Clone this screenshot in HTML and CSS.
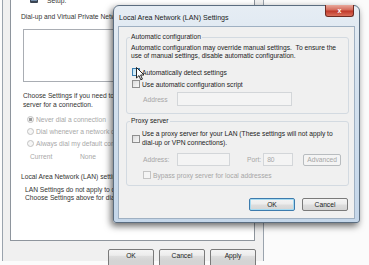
FILE: index.html
```html
<!DOCTYPE html>
<html lang="en">
<head>
    <meta charset="UTF-8">
    <title>Local Area Network (LAN) Settings</title>
    <link rel="stylesheet" href="styles.css">
</head>
<body>
    <div class="screen">
        <!-- Internet Properties, Connections tab (behind) -->
        <div class="window">
            <div class="panel">
                <div class="setup-row">
                    <svg class="setup-icon" width="8" height="8" viewBox="0 0 8 8"><rect x="0" y="0" width="8" height="7" rx="1" fill="#3a4552"/><rect x="1" y="1" width="6" height="4" fill="#6f8aa8"/></svg>
                    <span>Setup.</span>
                </div>
                <div class="section-title">Dial-up and Virtual Private Network settings</div>
                <div class="listbox"></div>
                <p class="note">Choose Settings if you need to configure a proxy<br>server for a connection.</p>
                <div class="radio-list">
                    <div class="radio checked"><span class="dot"></span>Never dial a connection</div>
                    <div class="radio"><span class="dot"></span>Dial whenever a network connection is not present</div>
                    <div class="radio"><span class="dot"></span>Always dial my default connection</div>
                </div>
                <div class="current"><span class="cur-label">Current</span><span>None</span></div>
                <div class="section-title lan-title">Local Area Network (LAN) settings</div>
                <p class="note lan-note">LAN Settings do not apply to dial-up connections.<br>Choose Settings above for dial-up settings.</p>
            </div>
            <div class="footer">
                <button class="btn wide">OK</button>
                <button class="btn wide">Cancel</button>
                <button class="btn wide">Apply</button>
            </div>
        </div>

        <!-- LAN settings dialog (on top) -->
        <div class="dialog">
            <div class="titlebar">
                <span class="title">Local Area Network (LAN) Settings</span>
                <span class="close">x</span>
            </div>
            <div class="client">
                <fieldset class="group auto-group">
                    <legend>Automatic configuration</legend>
                    <p class="desc">Automatic configuration may override manual settings.&nbsp; To ensure the<br>use of manual settings, disable automatic configuration.</p>
                    <div class="check-row"><span class="box hover"></span>Automatically detect settings</div>
                    <div class="check-row"><span class="box"></span>Use automatic configuration script</div>
                    <div class="field-row">
                        <span class="field-label off">Address</span>
                        <span class="field off script-field"></span>
                    </div>
                </fieldset>
                <fieldset class="group proxy-group">
                    <legend>Proxy server</legend>
                    <div class="check-row proxy-row"><span class="box"></span><span>Use a proxy server for your LAN (These settings will not apply to<br>dial-up or VPN connections).</span></div>
                    <div class="field-row proxy-fields">
                        <span class="field-label off">Address:</span>
                        <span class="field off addr-field"></span>
                        <span class="port-label off">Port:</span>
                        <span class="field off port-field">80</span>
                        <span class="btn small off">Advanced</span>
                    </div>
                    <div class="check-row bypass-row off"><span class="box off"></span>Bypass proxy server for local addresses</div>
                </fieldset>
                <div class="actions">
                    <button class="btn default">OK</button>
                    <button class="btn">Cancel</button>
                </div>
            </div>
        </div>

        <svg class="cursor" width="9" height="14" viewBox="0 0 9 14"><path d="M0.5 0.5 L0.5 11 L3 8.6 L4.8 12.8 L6.4 12.1 L4.6 8 L8 8 Z" fill="#fff" stroke="#111" stroke-width="0.9" stroke-linejoin="round"/></svg>
    </div>
</body>
</html>
```

FILE: styles.css
```css
/* --- Page --- */
body {
    margin: 0;
    background-color: #fbfbfb;
    font-family: 'Liberation Sans', Arial, sans-serif;
    font-size: 6.7px;
    color: #1c1c1c;
}

.screen {
    position: relative;
    width: 369px;
    height: 265px;
    overflow: hidden;
}

p {
    margin: 0;
}

.off {
    color: #a6a6a6;
}

/* --- Background window (Connections tab) --- */
.window {
    margin-left: 2px;
    width: 262px;
    height: 265px;
    box-sizing: border-box;
    border-left: 1px solid #9aa3ad;
    border-right: 1px solid #9aa3ad;
    background-color: #f0f0f0;
}

.panel {
    margin-left: 7px;
    width: 245px;
    height: 245px;
    box-sizing: border-box;
    border: 1px solid #8e959d;
    border-top: none;
    background-color: #fff;
    padding-left: 10px;
    color: #333;
    white-space: nowrap;
}

.setup-row {
    display: flex;
    align-items: center;
    height: 8px;
    margin-top: -4px;
    padding-left: 9px;
    gap: 9px;
}

.section-title {
    margin-top: 9px;
    line-height: 8px;
}

.listbox {
    margin-top: 8px;
    margin-left: 2px;
    width: 200px;
    height: 53px;
    box-sizing: border-box;
    border: 1px solid #a9adb3;
}

.note {
    margin-top: 9px;
    margin-left: 2px;
    line-height: 9px;
}

.radio-list {
    margin-top: 4px;
    margin-left: 6px;
}

.radio {
    display: flex;
    align-items: center;
    height: 12px;
    color: #a8a8a8;
}

.dot {
    width: 5px;
    height: 5px;
    border: 1px solid #c2c2c2;
    border-radius: 50%;
    background-color: #f6f6f6;
    margin-right: 2px;
    flex-shrink: 0;
}

.radio.checked .dot {
    background: radial-gradient(circle, #9a9a9a 0 1.4px, #f2f2f2 1.8px);
}

.current {
    display: flex;
    margin-top: 4px;
    margin-left: 9px;
    line-height: 8px;
    color: #a8a8a8;
}

.cur-label {
    width: 50px;
}

.lan-title {
    margin-top: 12px;
}

.lan-note {
    margin-top: 5px;
    margin-left: 4px;
    line-height: 8px;
}

.footer {
    display: flex;
    justify-content: flex-end;
    gap: 5px;
    padding-top: 8px;
    padding-right: 7px;
}

/* --- Buttons --- */
.btn {
    height: 13px;
    box-sizing: border-box;
    padding: 0;
    border: 1px solid #7a7a7a;
    border-radius: 2px;
    background: linear-gradient(#f4f4f4 0%, #ececec 48%, #dedede 52%, #d4d4d4 100%);
    font-family: inherit;
    font-size: inherit;
    color: #222;
    display: flex;
    align-items: center;
    justify-content: center;
}

.btn.wide {
    width: 46px;
    height: 20px;
    padding-bottom: 8px;
    background: linear-gradient(#f4f4f4 0%, #ececec 30%, #dedede 33%, #d4d4d4 60%);
}

.btn.default {
    border-color: #3d7bad;
    box-shadow: inset 0 0 0 1px #a6dbf2;
}

.btn.small.off {
    width: 38px;
    height: 12px;
    border-color: #b8bcbf;
    background: #f4f4f4;
    color: #a6a6a6;
}

/* --- LAN dialog --- */
.dialog {
    position: absolute;
    left: 113px;
    top: 5px;
    width: 247px;
    height: 218px;
    box-sizing: border-box;
    border: 1px solid #5b6d80;
    border-radius: 6px 6px 3px 3px;
    background: linear-gradient(#e6edf4, #d4e1ee 40%, #c4d6e9);
    box-shadow: -2px 3px 7px rgba(0, 0, 0, 0.6);
    padding: 0 4px 3px 4px;
    display: flex;
    flex-direction: column;
    white-space: nowrap;
}

.titlebar {
    display: flex;
    justify-content: space-between;
    height: 20px;
}

.title {
    padding-top: 8px;
    padding-left: 1px;
    font-size: 7.1px;
    line-height: 8px;
    color: #1b1b1b;
}

.close {
    margin-top: -1px;
    margin-right: 1px;
    width: 29px;
    height: 12px;
    box-sizing: border-box;
    border: 1px solid #6e2a22;
    border-top: none;
    border-radius: 0 0 3px 3px;
    background: linear-gradient(#e8a99c, #d46a5a 45%, #c0392b 55%, #d9705c);
    color: #fff;
    font-size: 7px;
    font-weight: bold;
    line-height: 11px;
    text-align: center;
}

.client {
    flex: 1;
    background-color: #f0f0f0;
    border: 1px solid #9fb0c2;
    display: flex;
    flex-direction: column;
}

/* --- Group boxes --- */
.group {
    margin: 6px 5px 0 7px;
    padding: 0 4px 7px 3px;
    border: 1px solid #d3dae1;
    border-radius: 3px;
    min-width: 0;
}

.group legend {
    padding: 0 1px;
    line-height: 8px;
}

.proxy-group {
    margin-top: 3px;
    padding-bottom: 5px;
}

.desc {
    margin-top: 3px;
    margin-left: 1px;
    line-height: 7.5px;
}

.check-row {
    display: flex;
    align-items: center;
    height: 12px;
    margin-left: 2px;
}

.auto-group .check-row:first-of-type {
    margin-top: 7px;
}

.box {
    width: 8px;
    height: 8px;
    box-sizing: border-box;
    border: 1px solid #8f8f8f;
    background: linear-gradient(135deg, #dcdcdc, #f8f8f8);
    margin-right: 2px;
    flex-shrink: 0;
}

.box.hover {
    border-color: #3c7fb1;
    background: linear-gradient(135deg, #bfe3f7, #e9f6fd);
}

.box.off {
    border-color: #c4c4c4;
    background: #f4f4f4;
}

.field-row {
    display: flex;
    align-items: center;
    margin-top: 2px;
    margin-left: 13px;
    height: 14px;
}

.field-label {
    width: 34px;
}

.field {
    height: 14px;
    box-sizing: border-box;
    border: 1px solid #d3d6d9;
    background-color: #f4f4f4;
    line-height: 12px;
    padding-left: 3px;
}

.script-field {
    width: 115px;
}

.proxy-row {
    margin-top: 5px;
    height: 17px;
    line-height: 8.5px;
}

.proxy-fields {
    margin-top: 6px;
    height: 13px;
}

.addr-field {
    width: 53px;
    height: 13px;
}

.port-label {
    margin-left: 17px;
    margin-right: 2px;
}

.port-field {
    width: 30px;
    height: 13px;
}

.proxy-fields .btn {
    margin-left: 10px;
}

.bypass-row {
    margin-top: 4px;
    margin-left: 13px;
    height: 10px;
}

.actions {
    display: flex;
    justify-content: flex-end;
    gap: 7px;
    margin-top: 12px;
    margin-right: 6px;
}

.actions .btn {
    width: 46px;
}

/* --- Mouse pointer --- */
.cursor {
    position: absolute;
    left: 136px;
    top: 67px;
}
```
